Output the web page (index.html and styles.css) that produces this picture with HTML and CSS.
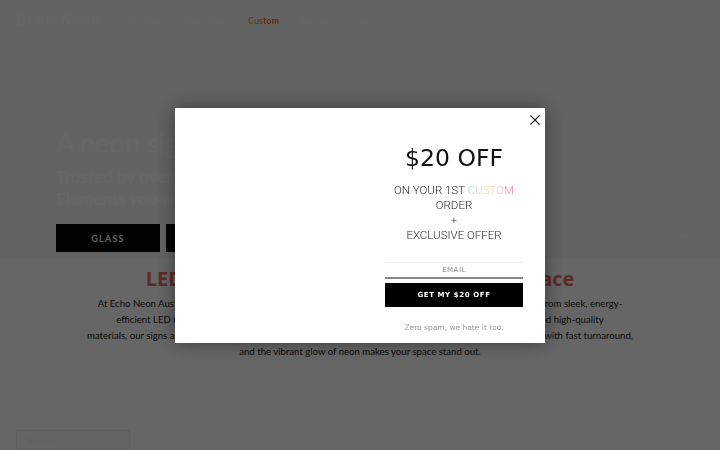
FILE: index.html
```html
<!DOCTYPE html>
<html>
<head>
<meta name="viewport" content="width=device-width, initial-scale=1.0">
<title>Echo Neon • Custom Neon Signs</title>
<link rel="stylesheet" href="styles.css">
</head>
<body>

  <!-- Hero with header on top -->
  <section class="hero">
    <header class="site-header">
      <a class="logo" href="#">Echo Neon</a>
      <nav class="main-nav">
        <a href="#">LED Neon</a>
        <a href="#">Glass Neon</a>
        <a href="#" class="nav-custom">Custom</a>
        <a href="#">Business</a>
        <a href="#">Contact</a>
      </nav>
      <span class="cart-icon">
        <svg width="14" height="14" viewBox="0 0 24 24" fill="none" stroke="#fff" stroke-width="1.6">
          <path d="M5 7h14l-1 13H6z"/><path d="M9 7a3 3 0 0 1 6 0"/>
        </svg>
      </span>
    </header>
    <div class="hero-content">
      <h1>A neon sign for every space</h1>
      <p class="hero-sub">Trusted by over 5,000 Australian homes<br>Elements you will love, made to order</p>
      <div class="hero-buttons">
        <a href="#" class="btn-dark">Glass</a>
        <a href="#" class="btn-dark">LED</a>
      </div>
    </div>
    <span class="hero-dot"></span>
  </section>

  <!-- Intro -->
  <section class="intro">
    <h2>LED Neon Signs That Transform Your Space</h2>
    <p>
      At Echo Neon Australia, we specialise in creating custom neon signs that bring your ideas to life in colour. From sleek, energy-<br>
      efficient LED neon to classic hand-bent glass neon, every single piece is crafted with precision, care, and high-quality<br>
      materials, our signs are perfect for homes, businesses, weddings, parties and events, delivered Australia-wide with fast turnaround,<br>
      and the vibrant glow of neon makes your space stand out.
    </p>
  </section>

  <div class="reviews-badge">Reviews</div>

  <!-- Popup -->
  <div class="overlay">
    <div class="popup">
      <div class="popup-media"></div>
      <div class="popup-body">
        <h3 class="popup-title">$20 OFF</h3>
        <p class="popup-lead">
          ON YOUR 1ST <span class="rainbow">CUSTOM</span><br>
          ORDER<br>
          +<br>
          EXCLUSIVE OFFER
        </p>
        <form class="popup-form">
          <input type="email" class="email-field" placeholder="EMAIL">
          <button type="button" class="btn-submit">GET MY $20 OFF</button>
        </form>
        <p class="popup-note">Zero spam, we hate it too.</p>
      </div>
      <button class="popup-close" aria-label="Close">
        <svg width="10" height="10" viewBox="0 0 10 10" stroke="#222" stroke-width="1.1">
          <path d="M0.5 0.5L9.5 9.5M9.5 0.5L0.5 9.5"/>
        </svg>
      </button>
    </div>
  </div>

</body>
</html>
```

FILE: styles.css
```css
* {box-sizing: border-box;}

body {
  margin: 0;
  background: #fff;
  font-family: Lato, "Liberation Sans", sans-serif;
  color: #222;
  height: 450px;
  overflow: hidden;
}

a { text-decoration: none; color: inherit; }

/* hero + header */
.hero {
  position: relative;
  height: 258px;
  background: #f8f8f8;
  color: #fff;
}

.site-header {
  height: 40px;
  display: flex;
  align-items: center;
  padding: 0 16px;
}

.logo {
  font-family: "Liberation Serif", serif;
  font-size: 16px;
  color: #fff;
  letter-spacing: 1.5px;
  width: 96px;
}

.main-nav {
  display: flex;
  gap: 20px;
  font-size: 9px;
  font-weight: 700;
  color: #fcfcfc;
  margin-left: 10px;
}

.nav-custom {
  background: linear-gradient(90deg, #f0a030, #e65a3a);
  -webkit-background-clip: text;
  background-clip: text;
  color: transparent;
}

.cart-icon {
  margin-left: auto;
  opacity: 0.5;
}

.hero-content {
  padding: 86px 56px 0;
}

.hero h1 {
  margin: 0;
  font-size: 27px;
  font-weight: 400;
  line-height: 34px;
  white-space: nowrap;
}

.hero-sub {
  margin: 6px 0 0;
  font-size: 17px;
  line-height: 22px;
  font-weight: 700;
}

.hero-buttons {
  display: flex;
  gap: 6px;
  margin-top: 14px;
}

.btn-dark {
  width: 104px;
  height: 28px;
  background: #080808;
  color: #eee;
  font-size: 9px;
  font-weight: 700;
  letter-spacing: 1.2px;
  text-transform: uppercase;
  display: flex;
  align-items: center;
  justify-content: center;
}

.hero-dot {
  position: absolute;
  right: 30px;
  bottom: 20px;
  width: 14px;
  height: 3px;
  background: #fff;
  opacity: 0.4;
}

/* intro */
.intro {
  text-align: center;
  padding-top: 9px;
}

.intro h2 {
  margin: 0;
  font-family: "Open Sans", sans-serif;
  font-size: 20px;
  font-weight: 700;
  color: #e86a5c;
  line-height: 24px;
}

.intro p {
  margin: 5px 0 0;
  font-size: 9.6px;
  line-height: 16px;
  color: #1a1a1a;
}

.reviews-badge {
  position: absolute;
  left: 16px;
  bottom: 0;
  width: 114px;
  height: 20px;
  background: #fafafa;
  border: 1px solid #eee;
  color: #f0f0f0;
  font-size: 8px;
  padding: 5px 10px;
}

/* popup */
.overlay {
  position: fixed;
  inset: 0;
  background: rgba(0, 0, 0, 0.6);
  display: flex;
  align-items: center;
  justify-content: center;
}

.popup {
  position: relative;
  width: 370px;
  height: 235px;
  background: #fff;
  display: grid;
  grid-template-columns: 185px 1fr;
  box-shadow: 0 0 18px rgba(0, 0, 0, 0.45);
}

.popup-body {
  padding: 36px 22px 0 25px;
  text-align: center;
}

.popup-title {
  margin: 0;
  font-family: "DejaVu Sans", sans-serif;
  font-weight: 400;
  font-size: 23.5px;
  line-height: 28px;
  color: #111;
}

.popup-lead {
  margin: 11px 0 0;
  font-family: Roboto, sans-serif;
  font-weight: 300;
  font-size: 11.5px;
  line-height: 15px;
  color: #2a2a2a;
}

.rainbow {
  background: linear-gradient(90deg, #8fd3e8, #d9e58c 40%, #f2b8a0 65%, #e76aa8);
  -webkit-background-clip: text;
  background-clip: text;
  color: transparent;
}

.popup-form {
  margin-top: 19px;
  display: flex;
  flex-direction: column;
  gap: 4px;
}

.email-field {
  height: 17px;
  border: none;
  border-top: 1px solid #f2f2f2;
  border-bottom: 2px solid #888;
  text-align: center;
  font-family: "DejaVu Sans", sans-serif;
  font-size: 7px;
  letter-spacing: 0.5px;
  padding: 0;
  outline: none;
}

.email-field::placeholder { color: #888; }

.btn-submit {
  height: 24px;
  border: none;
  background: #000;
  color: #fff;
  font-family: "DejaVu Sans", sans-serif;
  font-weight: 700;
  font-size: 7px;
  letter-spacing: 0.6px;
  cursor: pointer;
}

.popup-note {
  margin: 16px 0 0;
  font-family: "DejaVu Sans", sans-serif;
  font-size: 7.5px;
  letter-spacing: 0;
  color: #999;
}

.popup-close {
  position: absolute;
  top: 2px;
  right: 0;
  width: 20px;
  height: 20px;
  border: none;
  background: none;
  padding: 0;
  display: flex;
  align-items: center;
  justify-content: center;
}
```
